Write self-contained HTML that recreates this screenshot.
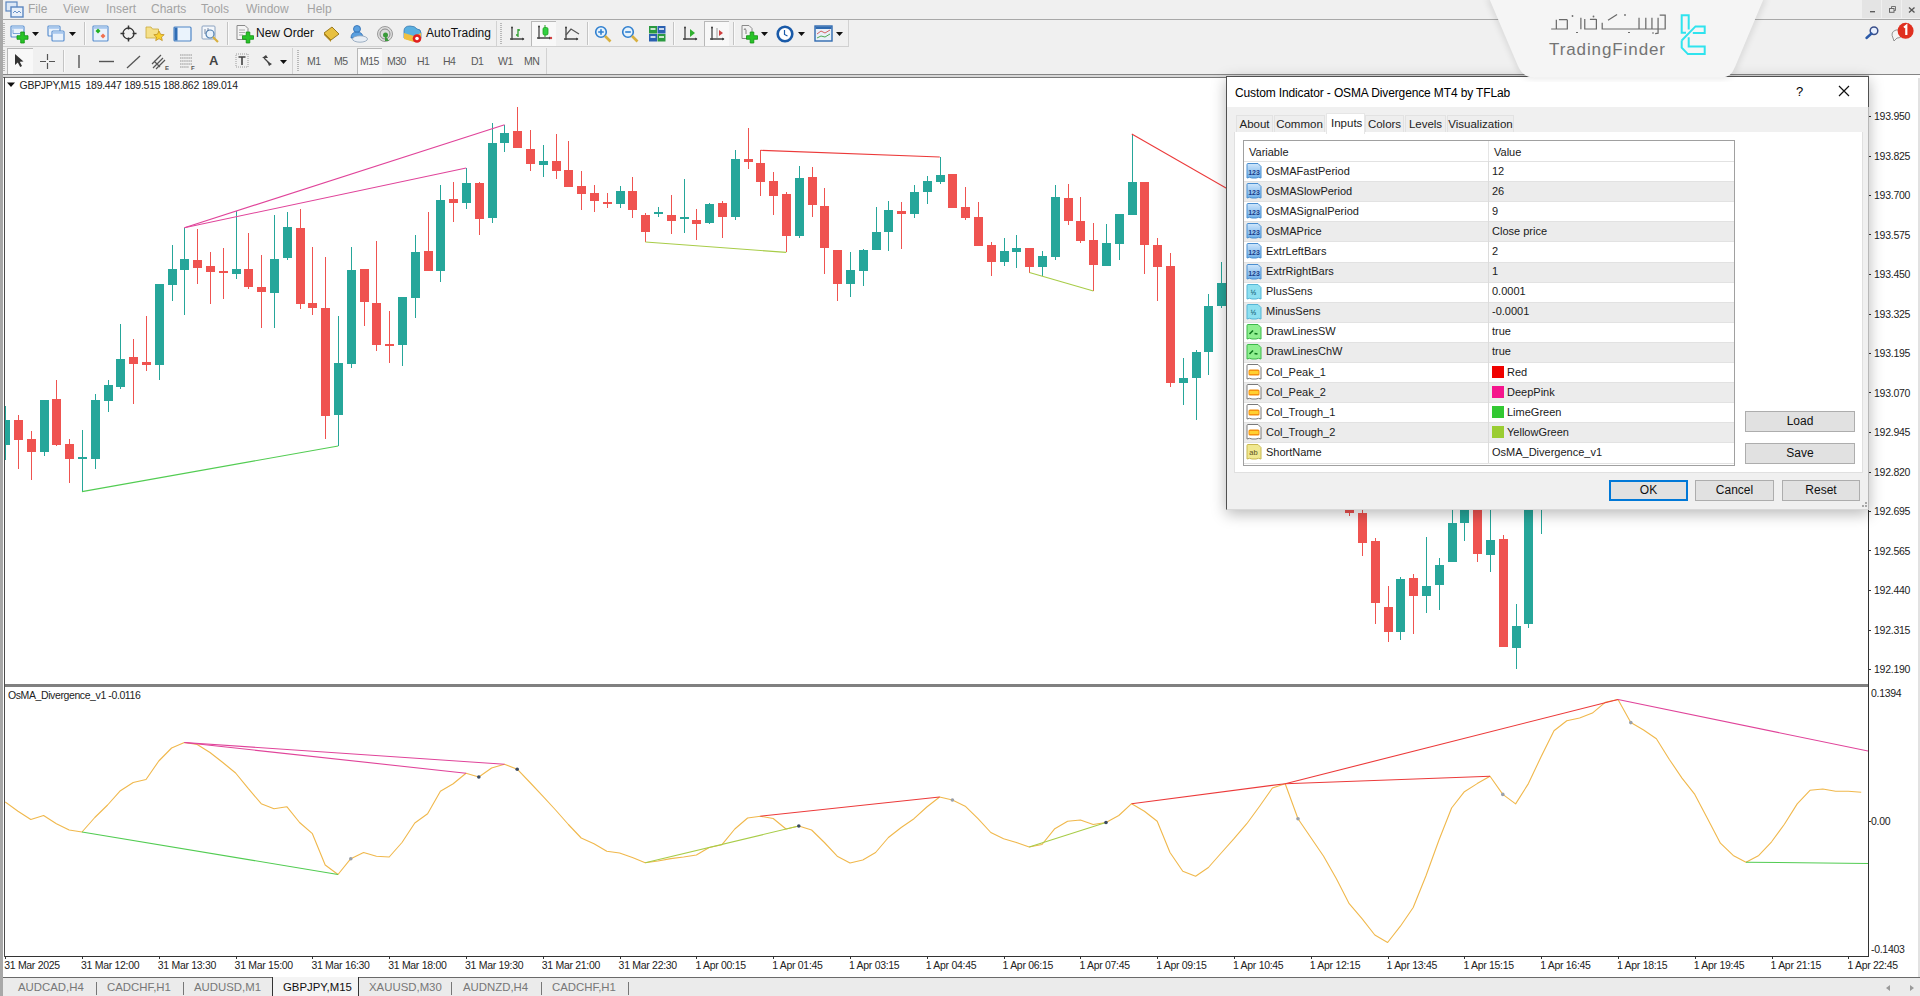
<!DOCTYPE html>
<html><head><meta charset="utf-8">
<style>
*{box-sizing:border-box}
html,body{margin:0;padding:0}
body{width:1920px;height:996px;overflow:hidden;position:relative;background:#f0f0f0;font-family:"Liberation Sans",sans-serif;}
.a{position:absolute}
.menu{left:0;top:0;width:1920px;height:20px;background:#f0f0f0;border-bottom:1px solid #a8a8a8}
.menu span{position:absolute;top:2px;font-size:12px;color:#a3a3a3}
.tb{left:0;width:1920px;background:#f0f0f0}
.chartwin{left:3px;top:77px;width:1917px;height:900px;background:#fff;border-top:1px solid #777}
svg{position:absolute;left:0;top:0}
.pl{position:absolute;left:1874px;font-size:10.5px;letter-spacing:-0.25px;color:#222;line-height:14px}
.tk{position:absolute;left:1868px;width:3px;height:1px;background:#333}
.tl{position:absolute;top:958px;font-size:10.5px;letter-spacing:-0.3px;color:#222;line-height:14px;white-space:nowrap}
.ttk{position:absolute;top:956px;width:1px;height:3px;background:#333}
.tabs{left:0;top:977px;width:1920px;height:19px;background:#ebebeb;border-top:1px solid #6a6a6a}
.tsep{position:absolute;top:4px;width:1px;height:13px;background:#777}
.tabs span{position:absolute;top:3px;font-size:11.4px;color:#777}
.dlg{position:absolute;left:0;top:0;z-index:20}
.dt{font-size:12px;letter-spacing:-0.13px;color:#000;white-space:nowrap;line-height:15px}
.dt2{font-size:11px;color:#1a1a1a;white-space:nowrap;line-height:14px}
.tab{background:#eeeeee;border:1px solid #e2e2e2;border-bottom:none;font-size:11.5px;color:#222;text-align:center;line-height:16px}
.tab.sel{background:#fff;color:#fff}
.tabt{font-size:11.5px;color:#222;line-height:14px}
.btn{background:#e1e1e1;border:1px solid #adadad;font-size:12px;color:#111;text-align:center;line-height:19px}
.btn.ok{border:2px solid #0078d7;line-height:17px}
.tbt{font-size:12px;color:#111;white-space:nowrap;line-height:15px}
.tf{font-size:10.5px;color:#5a5a5a;line-height:13px;letter-spacing:-0.5px}
</style></head>
<body>
<div class="a" style="left:0;top:0;width:3px;height:996px;background:#a8a8a8;z-index:5"></div>
<div class="a menu">
<span style="left:28px">File</span><span style="left:63px">View</span><span style="left:106px">Insert</span><span style="left:151px">Charts</span><span style="left:201px">Tools</span><span style="left:246px">Window</span><span style="left:307px">Help</span>
</div>
<div class="a tb" style="top:20px;height:27px"></div><div class="a" style="left:0;top:46px;width:849px;height:1px;background:#d0d0d0"></div>
<div class="a tb" style="top:47px;height:28px;border-bottom:1px solid #858585"></div>

<div class="a" style="left:1px;top:20px;width:848px;height:26px;border-right:1px solid #d2d2d2"></div>
<div class="a" style="left:496px;top:21px;width:1px;height:25px;background:#d2d2d2"></div>
<div class="a" style="left:3px;top:23px;width:2px;height:21px;background:repeating-linear-gradient(#b8b8b8 0 1px,transparent 1px 2px)"></div>
<div class="a" style="left:500px;top:23px;width:2px;height:21px;background:repeating-linear-gradient(#b8b8b8 0 1px,transparent 1px 2px)"></div>
<div class="a" style="left:3px;top:50px;width:2px;height:22px;background:repeating-linear-gradient(#b8b8b8 0 1px,transparent 1px 2px)"></div>
<div class="a" style="left:297px;top:50px;width:2px;height:22px;background:repeating-linear-gradient(#b8b8b8 0 1px,transparent 1px 2px)"></div>
<div class="a" style="left:546px;top:48px;width:1px;height:26px;background:#d2d2d2"></div>
<div class="a" style="left:292px;top:48px;width:1px;height:26px;background:#d2d2d2"></div>
<svg class="a" style="left:10px;top:25px" width="20" height="19" viewBox="0 0 20 19"><rect x="1" y="1" width="13" height="11" rx="1" fill="#eaf2fb" stroke="#5b8fcf" stroke-width="1.2"/><rect x="1.6" y="1.6" width="11.8" height="2.2" fill="#a8c8ee"/><path d="M3,4.5 v4 h7" stroke="#5b8fcf" stroke-width="0.8" fill="none"/><path d="M10.7,7.0 h3.6 v3.7 h3.7 v3.6 h-3.7 v3.7 h-3.6 v-3.7 h-3.7 v-3.6 h3.7 Z" fill="#28c428" stroke="#109010" stroke-width="0.8"/></svg>
<svg class="a" style="left:32px;top:32px" width="7" height="4" viewBox="0 0 7 4"><path d="M0,0 L7,0 L3.5,4 Z" fill="#111"/></svg>
<svg class="a" style="left:47px;top:25px" width="19" height="18" viewBox="0 0 19 18"><rect x="1" y="1" width="12" height="10" rx="1" fill="#eaf2fb" stroke="#5b8fcf" stroke-width="1.2"/><rect x="1.6" y="1.6" width="10.8" height="2.2" fill="#a8c8ee"/><rect x="5" y="6" width="12" height="10" rx="1" fill="#eaf2fb" stroke="#5b8fcf" stroke-width="1.2"/><rect x="5.6" y="6.6" width="10.8" height="2.2" fill="#a8c8ee"/></svg>
<svg class="a" style="left:69px;top:32px" width="7" height="4" viewBox="0 0 7 4"><path d="M0,0 L7,0 L3.5,4 Z" fill="#111"/></svg>
<div class="a" style="left:84px;top:22px;width:1px;height:23px;background:#c4c4c4"></div><div class="a" style="left:85px;top:22px;width:1px;height:23px;background:#fafafa"></div>
<svg class="a" style="left:92px;top:25px" width="18" height="18" viewBox="0 0 18 18"><rect x="1" y="1" width="15" height="15" rx="1" fill="#eaf2fb" stroke="#5b8fcf" stroke-width="1.2"/><rect x="1.6" y="1.6" width="13.8" height="2.2" fill="#a8c8ee"/><path d="M6,3.5 l2.5,2.5 l-2.5,2.5 l-2.5,-2.5Z" fill="#22b022"/><path d="M11,8.5 l2.5,2.5 l-2.5,2.5 l-2.5,-2.5Z" fill="#f07050"/></svg>
<svg class="a" style="left:120px;top:25px" width="17" height="17" viewBox="0 0 17 17"><circle cx="8.5" cy="8.5" r="5.5" fill="none" stroke="#333" stroke-width="1.3"/><path d="M8.5,0.5 v4 M8.5,12.5 v4 M0.5,8.5 h4 M12.5,8.5 h4" stroke="#333" stroke-width="1.5"/></svg>
<svg class="a" style="left:145px;top:24px" width="21" height="19" viewBox="0 0 21 19"><path d="M1,3 h5 l1.5,2 h6 v9 h-12.5Z" fill="#f5e08a" stroke="#c9a93a" stroke-width="0.8"/><path d="M14,7 l1.6,3.3 3.6,0.4 -2.7,2.4 0.8,3.5 -3.3,-1.9 -3.3,1.9 0.8,-3.5 -2.7,-2.4 3.6,-0.4Z" fill="#f8d030" stroke="#c09020" stroke-width="0.8"/></svg>
<svg class="a" style="left:173px;top:25px" width="19" height="18" viewBox="0 0 19 18"><rect x="1" y="2" width="17" height="14" rx="1" fill="#eaf3fc" stroke="#4f86c6" stroke-width="1.2"/><rect x="1.5" y="2.5" width="3" height="13" fill="#2f6db5"/></svg>
<svg class="a" style="left:201px;top:24px" width="20" height="20" viewBox="0 0 20 20"><rect x="1" y="2" width="13" height="13" rx="1" fill="#f4f7fb" stroke="#8aa2c0" stroke-width="1"/><circle cx="9" cy="10" r="4" fill="#e8f2fc" stroke="#4f7fb0" stroke-width="1.2"/><path d="M12,13 l5,5" stroke="#d8b040" stroke-width="2.2"/><path d="M4,5 v5 M7,4 v3" stroke="#5a7090" stroke-width="0.8"/></svg>
<div class="a" style="left:227px;top:22px;width:1px;height:23px;background:#c4c4c4"></div><div class="a" style="left:228px;top:22px;width:1px;height:23px;background:#fafafa"></div>
<svg class="a" style="left:235px;top:24px" width="20" height="20" viewBox="0 0 20 20"><path d="M2,1.5 h8 l3,3 v11 h-11Z" fill="#f4f4f4" stroke="#8a8a8a" stroke-width="1"/><path d="M4,6 h6 M4,8.5 h6 M4,11 h4" stroke="#999" stroke-width="0.8"/><path d="M11.2,8.0 h3.6 v3.7 h3.7 v3.6 h-3.7 v3.7 h-3.6 v-3.7 h-3.7 v-3.6 h3.7 Z" fill="#28c428" stroke="#109010" stroke-width="0.8"/></svg>
<div class="a tbt" style="left:256px;top:26px">New Order</div>
<svg class="a" style="left:322px;top:25px" width="19" height="18" viewBox="0 0 19 18"><path d="M2,8 l8,-6 l7,7 l-8,6Z" fill="#e8c040" stroke="#9a7a20" stroke-width="1"/><path d="M2,8 l7,7 v2 l-7,-7Z" fill="#b08820"/></svg>
<svg class="a" style="left:349px;top:24px" width="20" height="20" viewBox="0 0 20 20"><circle cx="8" cy="5" r="3.5" fill="#5aa0e0" stroke="#2a6ab0" stroke-width="0.8"/><path d="M2,14 q0,-6 6,-6 q6,0 6,6Z" fill="#5aa0e0" stroke="#2a6ab0" stroke-width="0.8"/><ellipse cx="11" cy="15" rx="7.5" ry="3.2" fill="#e8eef5" stroke="#8aa0b8" stroke-width="0.8"/></svg>
<svg class="a" style="left:376px;top:25px" width="19" height="18" viewBox="0 0 19 18"><circle cx="9" cy="9" r="7.5" fill="#dcdcdc" stroke="#9a9a9a" stroke-width="1"/><circle cx="9" cy="9" r="5" fill="none" stroke="#8a8a8a" stroke-width="1"/><circle cx="9.5" cy="10" r="2.5" fill="#3a9a3a"/><path d="M9,10 l4,6 h-4Z" fill="#3a9a3a"/></svg>
<svg class="a" style="left:402px;top:24px" width="21" height="20" viewBox="0 0 21 20"><path d="M2,7 q0,-5 6,-5 q5,0 7,3 q4,0 4,4 v5 l-7,3 l-10,-3Z" fill="#5ab0e0" stroke="#3a7ab0" stroke-width="0.8"/><path d="M2,9 l10,3 l7,-3 v6 l-7,3 l-10,-3Z" fill="#f0c040"/><circle cx="15" cy="14.5" r="4.3" fill="#e02020"/><circle cx="15" cy="14.5" r="1.8" fill="#fff"/></svg>
<div class="a tbt" style="left:426px;top:26px">AutoTrading</div>
<svg class="a" style="left:509px;top:25px" width="17" height="17" viewBox="0 0 17 17"><path d="M3,2 v13 M1,14 h14" stroke="#444" stroke-width="1.3"/><circle cx="3" cy="2.5" r="1" fill="#444"/><path d="M13,12.5 l2.5,1.5 l-2.5,1.5Z" fill="#444"/><path d="M9,4 v8 M9,5 h2 M7,10 h2" stroke="#30a030" stroke-width="1.3" fill="none"/></svg>
<div class="a" style="left:531px;top:21px;width:25px;height:25px;background:#f8f8f8;border-left:1px solid #b8b8b8;border-top:1px solid #b8b8b8"></div>
<svg class="a" style="left:536px;top:24px" width="17" height="18" viewBox="0 0 17 18"><path d="M3,2 v13 M1,14 h14" stroke="#444" stroke-width="1.3"/><circle cx="3" cy="2.5" r="1" fill="#444"/><path d="M13,12.5 l2.5,1.5 l-2.5,1.5Z" fill="#444"/><path d="M9,1 v12" stroke="#20a020" stroke-width="1"/><rect x="7" y="3.5" width="5" height="7.5" rx="1.5" fill="#30d040" stroke="#20a020" stroke-width="0.8"/><circle cx="15" cy="14" r="1.2" fill="#d04040"/></svg>
<svg class="a" style="left:563px;top:25px" width="17" height="17" viewBox="0 0 17 17"><path d="M3,2 v13 M1,14 h14" stroke="#444" stroke-width="1.3"/><circle cx="3" cy="2.5" r="1" fill="#444"/><path d="M13,12.5 l2.5,1.5 l-2.5,1.5Z" fill="#444"/><path d="M3,10 l5,-6 l8,5" stroke="#555" stroke-width="1.2" fill="none"/></svg>
<div class="a" style="left:587px;top:22px;width:1px;height:23px;background:#c4c4c4"></div><div class="a" style="left:588px;top:22px;width:1px;height:23px;background:#fafafa"></div>
<svg class="a" style="left:594px;top:25px" width="18" height="18" viewBox="0 0 18 18"><circle cx="7" cy="7" r="5.3" fill="#e6f3fd" stroke="#2f7fcf" stroke-width="1.6"/><path d="M11,11 l5.5,5.5" stroke="#d8b040" stroke-width="2.6"/><path d="M4.2,7 h5.6 M7,4.2 v5.6" stroke="#2f7fcf" stroke-width="1.6"/></svg>
<svg class="a" style="left:621px;top:25px" width="18" height="18" viewBox="0 0 18 18"><circle cx="7" cy="7" r="5.3" fill="#e6f3fd" stroke="#2f7fcf" stroke-width="1.6"/><path d="M11,11 l5.5,5.5" stroke="#d8b040" stroke-width="2.6"/><path d="M4.2,7 h5.6" stroke="#2f7fcf" stroke-width="1.6"/></svg>
<svg class="a" style="left:648px;top:25px" width="19" height="18" viewBox="0 0 19 18"><rect x="1" y="1" width="8" height="7.5" fill="#2a9a40"/><rect x="9.5" y="1" width="8" height="7.5" fill="#2a60b0"/><rect x="1" y="9" width="8" height="7.5" fill="#2a60b0"/><rect x="9.5" y="9" width="8" height="7.5" fill="#2a9a40"/><path d="M2.5,4 h5 M11,4 h5 M2.5,12 h5 M11,12 h5" stroke="#fff" stroke-width="1.5"/></svg>
<div class="a" style="left:673px;top:22px;width:1px;height:23px;background:#c4c4c4"></div><div class="a" style="left:674px;top:22px;width:1px;height:23px;background:#fafafa"></div>
<svg class="a" style="left:682px;top:25px" width="17" height="17" viewBox="0 0 17 17"><path d="M3,2 v13 M1,14 h14" stroke="#444" stroke-width="1.3"/><circle cx="3" cy="2.5" r="1" fill="#444"/><path d="M13,12.5 l2.5,1.5 l-2.5,1.5Z" fill="#444"/><path d="M8,4 l5,4 l-5,4Z" fill="#30b030"/></svg>
<div class="a" style="left:704px;top:21px;width:25px;height:25px;background:#f8f8f8;border-left:1px solid #b8b8b8;border-top:1px solid #b8b8b8"></div>
<svg class="a" style="left:709px;top:25px" width="17" height="17" viewBox="0 0 17 17"><path d="M3,2 v13 M1,14 h14" stroke="#444" stroke-width="1.3"/><circle cx="3" cy="2.5" r="1" fill="#444"/><path d="M13,12.5 l2.5,1.5 l-2.5,1.5Z" fill="#444"/><path d="M8,3 v10" stroke="#888" stroke-width="0.8"/><path d="M10,5 l4,3 l-4,3Z" fill="#d04040"/></svg>
<div class="a" style="left:733px;top:22px;width:1px;height:23px;background:#c4c4c4"></div><div class="a" style="left:734px;top:22px;width:1px;height:23px;background:#fafafa"></div>
<svg class="a" style="left:740px;top:24px" width="19" height="20" viewBox="0 0 19 20"><path d="M2,1.5 h7 l3,3 v10 h-10Z" fill="#f2f2f2" stroke="#8a8a8a" stroke-width="1"/><path d="M4,6 q1,-3 2,0 v4" stroke="#777" stroke-width="0.9" fill="none"/><path d="M10.2,8.0 h3.6 v3.7 h3.7 v3.6 h-3.7 v3.7 h-3.6 v-3.7 h-3.7 v-3.6 h3.7 Z" fill="#28c428" stroke="#109010" stroke-width="0.8"/></svg>
<svg class="a" style="left:761px;top:32px" width="7" height="4" viewBox="0 0 7 4"><path d="M0,0 L7,0 L3.5,4 Z" fill="#111"/></svg>
<svg class="a" style="left:776px;top:25px" width="19" height="18" viewBox="0 0 19 18"><circle cx="9" cy="9" r="7.3" fill="#fff" stroke="#1a5aa8" stroke-width="2.6"/><path d="M8.5,5 v4.5 l3,1.5" stroke="#1a5aa8" stroke-width="1.2" fill="none"/></svg>
<svg class="a" style="left:798px;top:32px" width="7" height="4" viewBox="0 0 7 4"><path d="M0,0 L7,0 L3.5,4 Z" fill="#111"/></svg>
<svg class="a" style="left:814px;top:25px" width="19" height="17" viewBox="0 0 19 17"><rect x="1" y="1" width="17" height="15" fill="#e8f0f8" stroke="#2f6ab0" stroke-width="1.4"/><rect x="1.5" y="1.5" width="16" height="2.5" fill="#2f6ab0"/><path d="M3,9 l4,-3 l4,2 l5,-3" stroke="#d05050" stroke-width="0.9" fill="none"/><path d="M3,13 l4,-2 l4,1 l5,-3" stroke="#40a040" stroke-width="0.9" fill="none"/></svg>
<svg class="a" style="left:836px;top:32px" width="7" height="4" viewBox="0 0 7 4"><path d="M0,0 L7,0 L3.5,4 Z" fill="#111"/></svg>
<div class="a" style="left:7px;top:48px;width:26px;height:26px;background:#f8f8f8;border-left:1px solid #b8b8b8;border-top:1px solid #b8b8b8"></div>
<svg class="a" style="left:14px;top:53px" width="11" height="15" viewBox="0 0 11 15"><path d="M1,1 L1,12 L3.8,9.5 L6.2,14 L8,13 L5.8,8.8 L9.5,8.5 Z" fill="#333"/></svg>
<svg class="a" style="left:39px;top:53px" width="17" height="17" viewBox="0 0 17 17"><path d="M8.5,1 v6 M8.5,10 v6 M1,8.5 h6 M10,8.5 h6" stroke="#555" stroke-width="1.2"/></svg>
<div class="a" style="left:63px;top:50px;width:1px;height:22px;background:#c4c4c4"></div><div class="a" style="left:64px;top:50px;width:1px;height:22px;background:#fafafa"></div>
<svg class="a" style="left:77px;top:54px" width="4" height="15" viewBox="0 0 4 15"><path d="M2,1 v13" stroke="#555" stroke-width="1.4"/></svg>
<svg class="a" style="left:99px;top:60px" width="16" height="3" viewBox="0 0 16 3"><path d="M0,1.5 h15" stroke="#555" stroke-width="1.4"/></svg>
<svg class="a" style="left:126px;top:54px" width="16" height="16" viewBox="0 0 16 16"><path d="M1,14 L14,2" stroke="#555" stroke-width="1.3"/></svg>
<svg class="a" style="left:151px;top:53px" width="18" height="18" viewBox="0 0 18 18"><path d="M1,11 L10,2 M2,15 L12,5 M5,16 L14,7 M3,8 L9,14" stroke="#555" stroke-width="1.2"/><text x="14" y="17" font-size="6" font-weight="bold" fill="#555" font-family="Liberation Sans">E</text></svg>
<svg class="a" style="left:179px;top:53px" width="18" height="18" viewBox="0 0 18 18"><path d="M1,2 h12 M1,5 h12 M1,8 h12 M1,11 h12 M1,14 h9" stroke="#888" stroke-width="0.9" stroke-dasharray="1.5 0.6"/><text x="12" y="17" font-size="6" font-weight="bold" fill="#555" font-family="Liberation Sans">F</text></svg>
<div class="a" style="left:209px;top:54px;font-size:13px;font-weight:bold;color:#444;line-height:14px">A</div>
<svg class="a" style="left:235px;top:53px" width="15" height="16" viewBox="0 0 15 16"><rect x="1" y="1" width="12" height="13" fill="none" stroke="#888" stroke-width="0.8" stroke-dasharray="1 1"/><path d="M3.5,4 h7 M7,4 v8" stroke="#444" stroke-width="1.6"/></svg>
<svg class="a" style="left:261px;top:54px" width="13" height="13" viewBox="0 0 13 13"><path d="M1,4 l4,-3 l2,3Z M6,7 l5,3 l-3,2Z" fill="#444"/><path d="M3,4 l5,5" stroke="#444" stroke-width="1.2"/></svg>
<svg class="a" style="left:280px;top:60px" width="7" height="4" viewBox="0 0 7 4"><path d="M0,0 L7,0 L3.5,4 Z" fill="#111"/></svg>
<div class="a" style="left:357px;top:48px;width:25px;height:26px;background:#f8f8f8;border-left:1px solid #b8b8b8;border-top:1px solid #b8b8b8"></div>
<div class="a tf" style="left:307px;top:55px">M1</div>
<div class="a tf" style="left:334px;top:55px">M5</div>
<div class="a tf" style="left:360px;top:55px">M15</div>
<div class="a tf" style="left:387px;top:55px">M30</div>
<div class="a tf" style="left:417px;top:55px">H1</div>
<div class="a tf" style="left:443px;top:55px">H4</div>
<div class="a tf" style="left:471px;top:55px">D1</div>
<div class="a tf" style="left:498px;top:55px">W1</div>
<div class="a tf" style="left:524px;top:55px">MN</div>
<div class="a" style="left:0;top:75px;width:1920px;height:2px;background:#d8d8d8"></div>
<div class="a chartwin"></div>
<div class="a" style="left:1869px;top:75px;width:51px;height:3px;background:#fff"></div>
<div class="a" style="left:1918px;top:78px;width:2px;height:899px;background:#e2e2e2"></div>
<svg width="1920" height="996" viewBox="0 0 1920 996" shape-rendering="crispEdges">
<defs><clipPath id="cm"><rect x="5" y="78" width="1863" height="607"/></clipPath>
<clipPath id="ci"><rect x="5" y="688" width="1863" height="268"/></clipPath></defs>
<g clip-path="url(#cm)">
<rect x="5" y="406" width="1" height="54" fill="#26a69a"/>
<rect x="1" y="420" width="8.5" height="25" fill="#26a69a"/>
<rect x="18" y="414.5" width="1" height="54.5" fill="#ef5350"/>
<rect x="14" y="420" width="8.5" height="19.5" fill="#ef5350"/>
<rect x="31" y="430.5" width="1" height="49.5" fill="#ef5350"/>
<rect x="27" y="439" width="8.5" height="12.5" fill="#ef5350"/>
<rect x="44" y="399.7" width="1" height="55.8" fill="#26a69a"/>
<rect x="40" y="399.7" width="8.5" height="52.7" fill="#26a69a"/>
<rect x="56" y="380" width="1" height="66" fill="#ef5350"/>
<rect x="52" y="398.8" width="8.5" height="45.8" fill="#ef5350"/>
<rect x="69" y="439" width="1" height="44" fill="#ef5350"/>
<rect x="65" y="444" width="8.5" height="14.5" fill="#ef5350"/>
<rect x="82" y="430" width="1" height="61.6" fill="#26a69a"/>
<rect x="78" y="457" width="8.5" height="2" fill="#26a69a"/>
<rect x="95" y="394" width="1" height="75" fill="#26a69a"/>
<rect x="91" y="400" width="8.5" height="58.5" fill="#26a69a"/>
<rect x="108" y="380" width="1" height="32" fill="#26a69a"/>
<rect x="104" y="385" width="8.5" height="16" fill="#26a69a"/>
<rect x="120" y="324.4" width="1" height="64.6" fill="#26a69a"/>
<rect x="116" y="358.8" width="8.5" height="28" fill="#26a69a"/>
<rect x="133" y="339" width="1" height="65" fill="#ef5350"/>
<rect x="129" y="356.7" width="8.5" height="6.9" fill="#ef5350"/>
<rect x="146" y="316" width="1" height="55" fill="#ef5350"/>
<rect x="142" y="362" width="8.5" height="3" fill="#ef5350"/>
<rect x="159" y="284" width="1" height="96" fill="#26a69a"/>
<rect x="155" y="284.3" width="8.5" height="80.7" fill="#26a69a"/>
<rect x="172" y="245" width="1" height="56" fill="#26a69a"/>
<rect x="168" y="269" width="8.5" height="16" fill="#26a69a"/>
<rect x="184" y="227.7" width="1" height="87.3" fill="#26a69a"/>
<rect x="180" y="258.7" width="8.5" height="11.3" fill="#26a69a"/>
<rect x="197" y="229" width="1" height="54.7" fill="#ef5350"/>
<rect x="193" y="260" width="8.5" height="8" fill="#ef5350"/>
<rect x="210" y="252" width="1" height="52" fill="#ef5350"/>
<rect x="206" y="266" width="8.5" height="5.7" fill="#ef5350"/>
<rect x="223" y="248" width="1" height="51" fill="#ef5350"/>
<rect x="219" y="270.8" width="8.5" height="2.2" fill="#ef5350"/>
<rect x="236" y="210.5" width="1" height="68.5" fill="#26a69a"/>
<rect x="232" y="269" width="8.5" height="4.8" fill="#26a69a"/>
<rect x="248" y="232.8" width="1" height="56.2" fill="#ef5350"/>
<rect x="244" y="268.6" width="8.5" height="18.8" fill="#ef5350"/>
<rect x="261" y="255" width="1" height="73.4" fill="#ef5350"/>
<rect x="257" y="286.7" width="8.5" height="4.8" fill="#ef5350"/>
<rect x="274" y="214.7" width="1" height="113" fill="#26a69a"/>
<rect x="270" y="259" width="8.5" height="33.5" fill="#26a69a"/>
<rect x="287" y="212" width="1" height="48" fill="#26a69a"/>
<rect x="283" y="227" width="8.5" height="31.4" fill="#26a69a"/>
<rect x="300" y="209" width="1" height="99.6" fill="#ef5350"/>
<rect x="296" y="227.7" width="8.5" height="76.1" fill="#ef5350"/>
<rect x="312" y="247" width="1" height="68.4" fill="#ef5350"/>
<rect x="308" y="303.4" width="8.5" height="4.6" fill="#ef5350"/>
<rect x="325" y="257.4" width="1" height="181.2" fill="#ef5350"/>
<rect x="321" y="308" width="8.5" height="108.4" fill="#ef5350"/>
<rect x="338" y="316.4" width="1" height="129.6" fill="#26a69a"/>
<rect x="334" y="362.5" width="8.5" height="52.9" fill="#26a69a"/>
<rect x="351" y="246.5" width="1" height="121.1" fill="#26a69a"/>
<rect x="347" y="270.4" width="8.5" height="93.6" fill="#26a69a"/>
<rect x="364" y="268.6" width="1" height="57" fill="#ef5350"/>
<rect x="360" y="268.6" width="8.5" height="33.4" fill="#ef5350"/>
<rect x="376" y="240.7" width="1" height="109.8" fill="#ef5350"/>
<rect x="372" y="302.8" width="8.5" height="42.6" fill="#ef5350"/>
<rect x="389" y="310.6" width="1" height="51.9" fill="#ef5350"/>
<rect x="385" y="344" width="8.5" height="2" fill="#ef5350"/>
<rect x="402" y="297" width="1" height="69" fill="#26a69a"/>
<rect x="398" y="297" width="8.5" height="48.4" fill="#26a69a"/>
<rect x="415" y="234.5" width="1" height="83.5" fill="#26a69a"/>
<rect x="411" y="251.6" width="8.5" height="46" fill="#26a69a"/>
<rect x="428" y="211.7" width="1" height="59.7" fill="#ef5350"/>
<rect x="424" y="251" width="8.5" height="20.4" fill="#ef5350"/>
<rect x="440" y="185" width="1" height="97.3" fill="#26a69a"/>
<rect x="436" y="199.7" width="8.5" height="71.7" fill="#26a69a"/>
<rect x="453" y="181.6" width="1" height="40.4" fill="#ef5350"/>
<rect x="449" y="199.4" width="8.5" height="3.6" fill="#ef5350"/>
<rect x="466" y="168" width="1" height="41" fill="#26a69a"/>
<rect x="462" y="182.7" width="8.5" height="20.3" fill="#26a69a"/>
<rect x="479" y="181.6" width="1" height="52.9" fill="#ef5350"/>
<rect x="475" y="182.7" width="8.5" height="36.3" fill="#ef5350"/>
<rect x="492" y="123" width="1" height="99.6" fill="#26a69a"/>
<rect x="488" y="143.4" width="8.5" height="74.1" fill="#26a69a"/>
<rect x="504" y="124.8" width="1" height="27.2" fill="#26a69a"/>
<rect x="500" y="132.6" width="8.5" height="10.6" fill="#26a69a"/>
<rect x="517" y="107" width="1" height="41" fill="#ef5350"/>
<rect x="513" y="131.4" width="8.5" height="16.6" fill="#ef5350"/>
<rect x="530" y="130" width="1" height="41.2" fill="#ef5350"/>
<rect x="526" y="148.5" width="8.5" height="15.5" fill="#ef5350"/>
<rect x="543" y="144.7" width="1" height="32" fill="#26a69a"/>
<rect x="539" y="161.3" width="8.5" height="3.9" fill="#26a69a"/>
<rect x="556" y="134.3" width="1" height="44.2" fill="#ef5350"/>
<rect x="552" y="160.6" width="8.5" height="9.9" fill="#ef5350"/>
<rect x="568" y="141" width="1" height="45.7" fill="#ef5350"/>
<rect x="564" y="170" width="8.5" height="16.7" fill="#ef5350"/>
<rect x="581" y="171" width="1" height="38.9" fill="#ef5350"/>
<rect x="577" y="186" width="8.5" height="8" fill="#ef5350"/>
<rect x="594" y="185" width="1" height="27" fill="#ef5350"/>
<rect x="590" y="192.6" width="8.5" height="8" fill="#ef5350"/>
<rect x="607" y="192.9" width="1" height="14.8" fill="#ef5350"/>
<rect x="603" y="201.7" width="8.5" height="2" fill="#ef5350"/>
<rect x="620" y="186" width="1" height="21.7" fill="#26a69a"/>
<rect x="616" y="191" width="8.5" height="12.7" fill="#26a69a"/>
<rect x="632" y="177.4" width="1" height="40.2" fill="#ef5350"/>
<rect x="628" y="191" width="8.5" height="19" fill="#ef5350"/>
<rect x="645" y="212.7" width="1" height="29.3" fill="#ef5350"/>
<rect x="641" y="215.4" width="8.5" height="16.1" fill="#ef5350"/>
<rect x="658" y="207" width="1" height="9.5" fill="#26a69a"/>
<rect x="654" y="212" width="8.5" height="2.3" fill="#26a69a"/>
<rect x="671" y="195" width="1" height="38.7" fill="#ef5350"/>
<rect x="667" y="215" width="8.5" height="5.5" fill="#ef5350"/>
<rect x="684" y="178.5" width="1" height="54.5" fill="#26a69a"/>
<rect x="680" y="217" width="8.5" height="2.4" fill="#26a69a"/>
<rect x="696" y="208.8" width="1" height="31.6" fill="#ef5350"/>
<rect x="692" y="220" width="8.5" height="3.6" fill="#ef5350"/>
<rect x="709" y="202.8" width="1" height="21.4" fill="#26a69a"/>
<rect x="705" y="204" width="8.5" height="18.7" fill="#26a69a"/>
<rect x="722" y="200.6" width="1" height="37.4" fill="#ef5350"/>
<rect x="718" y="203.2" width="8.5" height="13.3" fill="#ef5350"/>
<rect x="735" y="150" width="1" height="69.8" fill="#26a69a"/>
<rect x="731" y="159" width="8.5" height="58" fill="#26a69a"/>
<rect x="748" y="128.4" width="1" height="41" fill="#ef5350"/>
<rect x="744" y="159.3" width="8.5" height="3" fill="#ef5350"/>
<rect x="760" y="150.3" width="1" height="45.7" fill="#ef5350"/>
<rect x="756" y="163" width="8.5" height="18.8" fill="#ef5350"/>
<rect x="773" y="172" width="1" height="43" fill="#ef5350"/>
<rect x="769" y="180.8" width="8.5" height="14.7" fill="#ef5350"/>
<rect x="786" y="192" width="1" height="60.4" fill="#ef5350"/>
<rect x="782" y="193.6" width="8.5" height="42.4" fill="#ef5350"/>
<rect x="799" y="165.5" width="1" height="72.5" fill="#26a69a"/>
<rect x="795" y="177.6" width="8.5" height="58.4" fill="#26a69a"/>
<rect x="812" y="167" width="1" height="50" fill="#ef5350"/>
<rect x="808" y="176.6" width="8.5" height="28.4" fill="#ef5350"/>
<rect x="824" y="188.4" width="1" height="85.9" fill="#ef5350"/>
<rect x="820" y="205.6" width="8.5" height="42" fill="#ef5350"/>
<rect x="837" y="249.5" width="1" height="51.5" fill="#ef5350"/>
<rect x="833" y="250.4" width="8.5" height="34" fill="#ef5350"/>
<rect x="850" y="252.4" width="1" height="44.6" fill="#26a69a"/>
<rect x="846" y="270" width="8.5" height="13.8" fill="#26a69a"/>
<rect x="863" y="248.5" width="1" height="37.2" fill="#26a69a"/>
<rect x="859" y="250.4" width="8.5" height="20.6" fill="#26a69a"/>
<rect x="876" y="207" width="1" height="43" fill="#26a69a"/>
<rect x="872" y="231.7" width="8.5" height="18.3" fill="#26a69a"/>
<rect x="888" y="201" width="1" height="49.8" fill="#26a69a"/>
<rect x="884" y="210.4" width="8.5" height="21.9" fill="#26a69a"/>
<rect x="901" y="202.4" width="1" height="46.1" fill="#ef5350"/>
<rect x="897" y="211.3" width="8.5" height="2.9" fill="#ef5350"/>
<rect x="914" y="184.6" width="1" height="33.4" fill="#26a69a"/>
<rect x="910" y="191.9" width="8.5" height="22.3" fill="#26a69a"/>
<rect x="927" y="176" width="1" height="28.3" fill="#26a69a"/>
<rect x="923" y="180.8" width="8.5" height="11.5" fill="#26a69a"/>
<rect x="940" y="157" width="1" height="26.7" fill="#26a69a"/>
<rect x="936" y="175" width="8.5" height="6.8" fill="#26a69a"/>
<rect x="952" y="174" width="1" height="34" fill="#ef5350"/>
<rect x="948" y="174" width="8.5" height="34" fill="#ef5350"/>
<rect x="965" y="187" width="1" height="32.5" fill="#ef5350"/>
<rect x="961" y="206.6" width="8.5" height="11.4" fill="#ef5350"/>
<rect x="978" y="201.8" width="1" height="43.9" fill="#ef5350"/>
<rect x="974" y="217" width="8.5" height="28.7" fill="#ef5350"/>
<rect x="991" y="242.4" width="1" height="33.8" fill="#ef5350"/>
<rect x="987" y="245" width="8.5" height="16.5" fill="#ef5350"/>
<rect x="1004" y="238.3" width="1" height="28" fill="#26a69a"/>
<rect x="1000" y="251.4" width="8.5" height="10.2" fill="#26a69a"/>
<rect x="1016" y="235" width="1" height="32.9" fill="#26a69a"/>
<rect x="1012" y="247.6" width="8.5" height="4.7" fill="#26a69a"/>
<rect x="1029" y="248" width="1" height="24.5" fill="#ef5350"/>
<rect x="1025" y="248.2" width="8.5" height="18.8" fill="#ef5350"/>
<rect x="1042" y="250.7" width="1" height="24.9" fill="#26a69a"/>
<rect x="1038" y="256.3" width="8.5" height="10.7" fill="#26a69a"/>
<rect x="1055" y="185.4" width="1" height="74.6" fill="#26a69a"/>
<rect x="1051" y="197.2" width="8.5" height="59.8" fill="#26a69a"/>
<rect x="1068" y="183.8" width="1" height="41.4" fill="#ef5350"/>
<rect x="1064" y="198.4" width="8.5" height="22.6" fill="#ef5350"/>
<rect x="1080" y="197.2" width="1" height="45.8" fill="#ef5350"/>
<rect x="1076" y="220.5" width="8.5" height="20.3" fill="#ef5350"/>
<rect x="1093" y="222.7" width="1" height="68.3" fill="#ef5350"/>
<rect x="1089" y="239.8" width="8.5" height="25.6" fill="#ef5350"/>
<rect x="1106" y="224.3" width="1" height="42" fill="#26a69a"/>
<rect x="1102" y="243" width="8.5" height="23.3" fill="#26a69a"/>
<rect x="1119" y="214" width="1" height="45.5" fill="#26a69a"/>
<rect x="1115" y="214" width="8.5" height="29.9" fill="#26a69a"/>
<rect x="1132" y="134" width="1" height="81" fill="#26a69a"/>
<rect x="1128" y="181.6" width="8.5" height="33.4" fill="#26a69a"/>
<rect x="1144" y="182.3" width="1" height="91.7" fill="#ef5350"/>
<rect x="1140" y="182.3" width="8.5" height="63.1" fill="#ef5350"/>
<rect x="1157" y="237.7" width="1" height="62.8" fill="#ef5350"/>
<rect x="1153" y="245" width="8.5" height="22" fill="#ef5350"/>
<rect x="1170" y="253.2" width="1" height="133.8" fill="#ef5350"/>
<rect x="1166" y="266.3" width="8.5" height="116.7" fill="#ef5350"/>
<rect x="1183" y="358" width="1" height="46.8" fill="#26a69a"/>
<rect x="1179" y="378.4" width="8.5" height="4.6" fill="#26a69a"/>
<rect x="1196" y="349.7" width="1" height="69.8" fill="#26a69a"/>
<rect x="1192" y="352" width="8.5" height="26.4" fill="#26a69a"/>
<rect x="1208" y="293.7" width="1" height="81.6" fill="#26a69a"/>
<rect x="1204" y="306" width="8.5" height="46" fill="#26a69a"/>
<rect x="1221" y="261.6" width="1" height="46.4" fill="#26a69a"/>
<rect x="1217" y="282.5" width="8.5" height="23.5" fill="#26a69a"/>
<rect x="1349" y="480" width="1" height="36" fill="#ef5350"/>
<rect x="1345" y="490" width="8.5" height="22.7" fill="#ef5350"/>
<rect x="1362" y="490" width="1" height="65.6" fill="#ef5350"/>
<rect x="1358" y="513.3" width="8.5" height="29.2" fill="#ef5350"/>
<rect x="1375" y="538" width="1" height="86" fill="#ef5350"/>
<rect x="1371" y="540.5" width="8.5" height="62.5" fill="#ef5350"/>
<rect x="1388" y="586" width="1" height="56" fill="#ef5350"/>
<rect x="1384" y="606.7" width="8.5" height="25.6" fill="#ef5350"/>
<rect x="1400" y="576.6" width="1" height="63.4" fill="#26a69a"/>
<rect x="1396" y="579" width="8.5" height="53.3" fill="#26a69a"/>
<rect x="1413" y="573.7" width="1" height="60.7" fill="#ef5350"/>
<rect x="1409" y="578.4" width="8.5" height="17.2" fill="#ef5350"/>
<rect x="1426" y="536.7" width="1" height="75.8" fill="#26a69a"/>
<rect x="1422" y="586" width="8.5" height="9.6" fill="#26a69a"/>
<rect x="1439" y="557.7" width="1" height="52.3" fill="#26a69a"/>
<rect x="1435" y="565" width="8.5" height="19.8" fill="#26a69a"/>
<rect x="1452" y="490" width="1" height="72.3" fill="#26a69a"/>
<rect x="1448" y="523" width="8.5" height="39.3" fill="#26a69a"/>
<rect x="1464" y="480" width="1" height="61" fill="#26a69a"/>
<rect x="1460" y="490" width="8.5" height="33" fill="#26a69a"/>
<rect x="1477" y="480" width="1" height="81.5" fill="#ef5350"/>
<rect x="1473" y="490" width="8.5" height="63.6" fill="#ef5350"/>
<rect x="1490" y="480" width="1" height="91.7" fill="#26a69a"/>
<rect x="1486" y="540" width="8.5" height="14.7" fill="#26a69a"/>
<rect x="1503" y="535" width="1" height="112" fill="#ef5350"/>
<rect x="1499" y="539" width="8.5" height="108" fill="#ef5350"/>
<rect x="1516" y="603.7" width="1" height="65.7" fill="#26a69a"/>
<rect x="1512" y="625.6" width="8.5" height="21.9" fill="#26a69a"/>
<rect x="1528" y="480" width="1" height="147.7" fill="#26a69a"/>
<rect x="1524" y="490" width="8.5" height="134" fill="#26a69a"/>
<rect x="1541" y="460" width="1" height="73.7" fill="#26a69a"/>
<rect x="1537" y="470" width="8.5" height="20" fill="#26a69a"/>
<line x1="184.4" y1="227.7" x2="504.6" y2="124.8" stroke="#e0449a" stroke-width="1.1" shape-rendering="auto"/>
<line x1="184.4" y1="227.7" x2="466.2" y2="168" stroke="#e0449a" stroke-width="1.1" shape-rendering="auto"/>
<line x1="82" y1="491.6" x2="338.2" y2="446" stroke="#52cc52" stroke-width="1.1" shape-rendering="auto"/>
<line x1="645.4" y1="242" x2="786.2" y2="252.4" stroke="#a8cc48" stroke-width="1.1" shape-rendering="auto"/>
<line x1="760.6" y1="150.3" x2="939.8" y2="157" stroke="#ec3a3a" stroke-width="1.1" shape-rendering="auto"/>
<line x1="1029.4" y1="272.5" x2="1093.4" y2="291" stroke="#a8cc48" stroke-width="1.1" shape-rendering="auto"/>
<line x1="1131.8" y1="134" x2="1285.2" y2="222" stroke="#ec3a3a" stroke-width="1.1" shape-rendering="auto"/>
</g>
<g clip-path="url(#ci)" shape-rendering="auto">
<polyline points="5.2,802 18,811.2 30.8,819.5 43.6,815.5 56.4,823.7 69.2,830 82,832 94.8,817.5 107.6,805 120.4,790.7 133.2,782.5 146,779.5 158.8,761 171.6,748 184.4,742.5 197.2,744.5 210,752.5 222.8,762.5 235.6,773 248.4,788.7 261.2,803.7 274,808.7 286.8,806.7 299.6,822.5 312.4,833.7 325.2,865 338,874.5 350.8,858.7 363.6,852.5 376.4,856.2 389.2,857 402,842.5 414.8,823 427.6,813.7 440.4,791.2 453.2,783.7 466,773.2 478.8,777 491.6,768 504.4,764.2 517.2,769.2 530,782.5 542.8,796.2 555.6,810 568.4,824.5 581.2,838 594,843.7 606.8,851.2 619.6,853 632.4,857.5 645.2,862.7 658,861 670.8,858.6 683.6,857 696.4,855 709.2,847.5 722,844.7 734.8,829 747.6,818 760.4,816.2 773.2,818.5 786,829 798.8,826 811.6,830 824.4,842.5 837.2,856.2 850,863 862.8,860 875.6,852.5 888.4,837.5 901.2,827.5 914,818.7 926.8,807 939.6,797 952.4,800 965.2,806.2 978,818.7 990.8,832.5 1003.6,838.7 1016.4,842.5 1029.2,847 1042,844.5 1054.8,828.7 1067.6,821.2 1080.4,820 1093.2,824.5 1106,822.5 1118.8,815.5 1131.6,803.7 1144.4,811.2 1157.2,821.2 1170,852.5 1182.8,871.2 1195.6,876.2 1208.4,867.5 1221.2,853 1234,838.7 1246.8,823.7 1259.6,806.2 1272.4,788 1285.2,783.7 1298,818.7 1310.8,837.5 1323.6,856.2 1336.4,878.7 1349.2,903.7 1362,918.7 1374.8,935 1387.6,942.5 1400.4,926.2 1413.2,907.5 1426,875.7 1438.8,840.5 1451.6,808 1464.4,791.7 1477.2,783.6 1490,776.2 1502.8,794.4 1515.6,803.9 1528.4,783.6 1541.2,756.5 1554,730.7 1566.8,720.7 1579.6,718 1592.4,713.1 1605.2,702.3 1618,699.5 1630.8,722.6 1643.6,730 1656.4,738.8 1669.2,759.2 1682,778.1 1694.8,794.4 1707.6,818.8 1720.4,843.2 1733.2,855.4 1746,862.2 1758.8,855.4 1771.6,841.8 1784.4,824.2 1797.2,803.9 1810,790.3 1822.8,789 1835.6,791.2 1848.4,791.2 1861.2,792.2" fill="none" stroke="#f0b84c" stroke-width="1.1" stroke-linejoin="round"/>
<line x1="184.4" y1="742.5" x2="504.4" y2="764.2" stroke="#e0449a" stroke-width="1.1"/>
<line x1="184.4" y1="742.5" x2="466" y2="773.2" stroke="#e0449a" stroke-width="1.1"/>
<line x1="82" y1="832" x2="338" y2="874.5" stroke="#52cc52" stroke-width="1.1"/>
<line x1="645.2" y1="862.7" x2="798.8" y2="826" stroke="#a8cc48" stroke-width="1.1"/>
<line x1="760.4" y1="816.2" x2="939.6" y2="797" stroke="#ec3a3a" stroke-width="1.1"/>
<line x1="1029.2" y1="847" x2="1106" y2="822.5" stroke="#a8cc48" stroke-width="1.1"/>
<line x1="1131.6" y1="803.7" x2="1285.2" y2="783.7" stroke="#ec3a3a" stroke-width="1.1"/>
<line x1="1285.2" y1="783.7" x2="1618" y2="699.5" stroke="#ec3a3a" stroke-width="1.1"/>
<line x1="1285.2" y1="783.7" x2="1490" y2="776.2" stroke="#ec3a3a" stroke-width="1.1"/>
<line x1="1618" y1="699.5" x2="1868" y2="751" stroke="#e0449a" stroke-width="1.1"/>
<line x1="1746" y1="862.2" x2="1868" y2="863.5" stroke="#52cc52" stroke-width="1.1"/>
<circle cx="350.8" cy="858.7" r="1.8" fill="#9aa0a8"/>
<circle cx="478.8" cy="777" r="1.8" fill="#3a4a60"/>
<circle cx="517.2" cy="769.2" r="1.8" fill="#3a4a60"/>
<circle cx="798.8" cy="826" r="1.8" fill="#3a4a60"/>
<circle cx="952.4" cy="800" r="1.8" fill="#9aa0a8"/>
<circle cx="1106" cy="822.5" r="1.8" fill="#3a4a60"/>
<circle cx="1298" cy="818.7" r="1.8" fill="#9aa0a8"/>
<circle cx="1502.8" cy="794.4" r="1.8" fill="#9aa0a8"/>
<circle cx="1630.8" cy="722.6" r="1.8" fill="#9aa0a8"/>
</g>
<rect x="1868" y="78" width="1" height="878" fill="#333"/>
<rect x="4" y="77" width="1" height="880" fill="#4a4a4a"/>
<rect x="5" y="684" width="1863" height="3" fill="#808080"/>
<rect x="5" y="956" width="1864" height="1" fill="#333"/>
<rect x="1868" y="821" width="3" height="1" fill="#333"/>
</svg>
<div class="pl" style="top:109px">193.950</div>
<div class="tk" style="top:116px"></div>
<div class="pl" style="top:148.5px">193.825</div>
<div class="tk" style="top:156px"></div>
<div class="pl" style="top:188px">193.700</div>
<div class="tk" style="top:195px"></div>
<div class="pl" style="top:227.5px">193.575</div>
<div class="tk" style="top:234px"></div>
<div class="pl" style="top:267px">193.450</div>
<div class="tk" style="top:274px"></div>
<div class="pl" style="top:306.5px">193.325</div>
<div class="tk" style="top:314px"></div>
<div class="pl" style="top:346px">193.195</div>
<div class="tk" style="top:353px"></div>
<div class="pl" style="top:385.5px">193.070</div>
<div class="tk" style="top:392px"></div>
<div class="pl" style="top:425px">192.945</div>
<div class="tk" style="top:432px"></div>
<div class="pl" style="top:464.5px">192.820</div>
<div class="tk" style="top:472px"></div>
<div class="pl" style="top:504px">192.695</div>
<div class="tk" style="top:511px"></div>
<div class="pl" style="top:543.5px">192.565</div>
<div class="tk" style="top:550px"></div>
<div class="pl" style="top:583px">192.440</div>
<div class="tk" style="top:590px"></div>
<div class="pl" style="top:622.5px">192.315</div>
<div class="tk" style="top:630px"></div>
<div class="pl" style="top:662px">192.190</div>
<div class="tk" style="top:669px"></div>
<div class="tl" style="left:4.2px">31 Mar 2025</div>
<div class="ttk" style="left:5px"></div>
<div class="tl" style="left:81px">31 Mar 12:00</div>
<div class="ttk" style="left:82px"></div>
<div class="tl" style="left:157.8px">31 Mar 13:30</div>
<div class="ttk" style="left:159px"></div>
<div class="tl" style="left:234.6px">31 Mar 15:00</div>
<div class="ttk" style="left:236px"></div>
<div class="tl" style="left:311.4px">31 Mar 16:30</div>
<div class="ttk" style="left:312px"></div>
<div class="tl" style="left:388.2px">31 Mar 18:00</div>
<div class="ttk" style="left:389px"></div>
<div class="tl" style="left:465px">31 Mar 19:30</div>
<div class="ttk" style="left:466px"></div>
<div class="tl" style="left:541.8px">31 Mar 21:00</div>
<div class="ttk" style="left:543px"></div>
<div class="tl" style="left:618.6px">31 Mar 22:30</div>
<div class="ttk" style="left:620px"></div>
<div class="tl" style="left:695.4px">1 Apr 00:15</div>
<div class="ttk" style="left:696px"></div>
<div class="tl" style="left:772.2px">1 Apr 01:45</div>
<div class="ttk" style="left:773px"></div>
<div class="tl" style="left:849px">1 Apr 03:15</div>
<div class="ttk" style="left:850px"></div>
<div class="tl" style="left:925.8px">1 Apr 04:45</div>
<div class="ttk" style="left:927px"></div>
<div class="tl" style="left:1002.6px">1 Apr 06:15</div>
<div class="ttk" style="left:1004px"></div>
<div class="tl" style="left:1079.4px">1 Apr 07:45</div>
<div class="ttk" style="left:1080px"></div>
<div class="tl" style="left:1156.2px">1 Apr 09:15</div>
<div class="ttk" style="left:1157px"></div>
<div class="tl" style="left:1233px">1 Apr 10:45</div>
<div class="ttk" style="left:1234px"></div>
<div class="tl" style="left:1309.8px">1 Apr 12:15</div>
<div class="ttk" style="left:1311px"></div>
<div class="tl" style="left:1386.6px">1 Apr 13:45</div>
<div class="ttk" style="left:1388px"></div>
<div class="tl" style="left:1463.4px">1 Apr 15:15</div>
<div class="ttk" style="left:1464px"></div>
<div class="tl" style="left:1540.2px">1 Apr 16:45</div>
<div class="ttk" style="left:1541px"></div>
<div class="tl" style="left:1617px">1 Apr 18:15</div>
<div class="ttk" style="left:1618px"></div>
<div class="tl" style="left:1693.8px">1 Apr 19:45</div>
<div class="ttk" style="left:1695px"></div>
<div class="tl" style="left:1770.6px">1 Apr 21:15</div>
<div class="ttk" style="left:1772px"></div>
<div class="tl" style="left:1847.4px">1 Apr 22:45</div>
<div class="ttk" style="left:1848px"></div>
<svg class="a" style="left:7px;top:82px" width="9" height="6" viewBox="0 0 9 6"><path d="M0,0.5 H8 L4,5 Z" fill="#111"/></svg><div class="a" style="left:19.5px;top:79px;font-size:10.5px;letter-spacing:-0.27px;color:#222;white-space:nowrap;line-height:13px">GBPJPY,M15&nbsp; 189.447 189.515 188.862 189.014</div>
<div class="a" style="left:8px;top:689px;font-size:10.5px;letter-spacing:-0.4px;color:#222;white-space:nowrap;line-height:13px">OsMA_Divergence_v1 -0.0116</div>
<div class="a" style="left:1871px;top:687px;font-size:10.5px;letter-spacing:-0.3px;color:#222;line-height:13px">0.1394</div>
<div class="a" style="left:1871px;top:815px;font-size:10.5px;letter-spacing:-0.3px;color:#222;line-height:13px">0.00</div>
<div class="a" style="left:1871px;top:943px;font-size:10.5px;letter-spacing:-0.3px;color:#222;line-height:13px">-0.1403</div>

<div class="a tabs">
<span style="left:18px">AUDCAD,H4</span><span style="left:107px">CADCHF,H1</span><span style="left:194px">AUDUSD,M1</span>
<div class="a" style="left:272px;top:-1px;width:87px;height:20px;border:1px solid #333;border-top:none;background:#f4f4f4"></div><span style="left:283px;color:#111">GBPJPY,M15</span><div class="tsep" style="left:96px"></div><div class="tsep" style="left:183px"></div><div class="tsep" style="left:451px"></div><div class="tsep" style="left:541px"></div><div class="tsep" style="left:628px"></div><svg class="a" style="left:1880px;top:4px" width="40" height="12" viewBox="0 0 40 12"><path d="M10,3 l-4,3 l4,3Z M30,3 l4,3 l-4,3Z" fill="#9a9a9a"/></svg><span style="left:369px">XAUUSD,M30</span><span style="left:463px">AUDNZD,H4</span><span style="left:552px">CADCHF,H1</span>
</div>

<div class="dlg">
<div class="a" style="left:1226px;top:76px;width:643px;height:434px;background:#f0f0f0;border:1px solid #505050;border-right:1px solid #b8b8b8;border-bottom:1px solid #d8d8d8;box-shadow:0 4px 14px rgba(0,0,0,0.28)"></div>
<div class="a" style="left:1868px;top:76px;width:1px;height:31px;background:#505050"></div>
<svg class="a" style="left:1860px;top:501px" width="8" height="8" viewBox="0 0 8 8"><g fill="#a8a8a8"><rect x="5" y="1" width="2" height="2"/><rect x="2" y="4" width="2" height="2"/><rect x="5" y="4" width="2" height="2"/></g></svg>
<div class="a" style="left:1227px;top:77px;width:641px;height:30px;background:#fff"></div>
<div class="a dt" style="left:1235px;top:85.5px">Custom Indicator - OSMA Divergence MT4 by TFLab</div>
<div class="a dt" style="left:1796px;top:84px;font-size:13px">?</div>
<svg class="a" style="left:1838px;top:85px" width="12" height="12" viewBox="0 0 12 12"><path d="M1,1 L11,11 M11,1 L1,11" stroke="#111" stroke-width="1.2"/></svg>
<div class="a tab" style="left:1236px;top:115px;width:37px;height:18px">About</div>
<div class="a tab" style="left:1274px;top:115px;width:51px;height:18px">Common</div>
<div class="a tab sel" style="left:1326px;top:113px;width:39px;height:21px">Inputs</div>
<div class="a tab" style="left:1365px;top:115px;width:39px;height:18px">Colors</div>
<div class="a tab" style="left:1405px;top:115px;width:41px;height:18px">Levels</div>
<div class="a tab" style="left:1447px;top:115px;width:67px;height:18px">Visualization</div>
<div class="a" style="left:1234px;top:132px;width:629px;height:341px;background:#fff;border:1px solid #e0e0e0;border-top:none"></div>
<div class="a" style="left:1326px;top:113px;width:39px;height:21px;background:#fff;border:1px solid #e6e6e6;border-bottom:none;z-index:2"></div>
<div class="a tabt" style="left:1331px;top:116px;z-index:3">Inputs</div>
<div class="a" style="left:1243px;top:140px;width:492px;height:326px;background:#fff;border:1px solid #a0a0a0"></div>
<div class="a dt2" style="left:1249px;top:145px">Variable</div>
<div class="a dt2" style="left:1494px;top:145px">Value</div>
<div class="a" style="left:1488px;top:141px;width:1px;height:20px;background:#e5e5e5"></div>
<div class="a" style="left:1244px;top:161.0px;width:490px;height:20.1px;background:#fff;border-top:1px solid #e2e2e2"></div>
<div class="a" style="left:1246px;top:163.0px;width:16px;height:16px"><svg width="16" height="16" viewBox="0 0 16 16"><defs><linearGradient id="gi" x1="0" y1="0" x2="0" y2="1"><stop offset="0" stop-color="#cfe6fb"/><stop offset="1" stop-color="#6fb0ea"/></linearGradient></defs><path d="M1,1.5 Q1,0.5 2,0.5 L12,0.5 L15,3.5 L15,15 Q12.5,13.6 10,15 L6,15 Q3.5,13.6 1,15 Z" fill="url(#gi)" stroke="#4a8fd0" stroke-width="1"/><text x="8" y="11.5" font-size="7" font-weight="bold" text-anchor="middle" fill="#1a3f8a" font-family="Liberation Sans">123</text></svg></div>
<div class="a dt2" style="left:1266px;top:163.5px">OsMAFastPeriod</div>
<div class="a dt2" style="left:1492px;top:163.5px">12</div>
<div class="a" style="left:1244px;top:181.1px;width:490px;height:20.1px;background:#ececec;border-top:1px solid #e2e2e2"></div>
<div class="a" style="left:1246px;top:183.1px;width:16px;height:16px"><svg width="16" height="16" viewBox="0 0 16 16"><defs><linearGradient id="gi" x1="0" y1="0" x2="0" y2="1"><stop offset="0" stop-color="#cfe6fb"/><stop offset="1" stop-color="#6fb0ea"/></linearGradient></defs><path d="M1,1.5 Q1,0.5 2,0.5 L12,0.5 L15,3.5 L15,15 Q12.5,13.6 10,15 L6,15 Q3.5,13.6 1,15 Z" fill="url(#gi)" stroke="#4a8fd0" stroke-width="1"/><text x="8" y="11.5" font-size="7" font-weight="bold" text-anchor="middle" fill="#1a3f8a" font-family="Liberation Sans">123</text></svg></div>
<div class="a dt2" style="left:1266px;top:183.6px">OsMASlowPeriod</div>
<div class="a dt2" style="left:1492px;top:183.6px">26</div>
<div class="a" style="left:1244px;top:201.2px;width:490px;height:20.1px;background:#fff;border-top:1px solid #e2e2e2"></div>
<div class="a" style="left:1246px;top:203.2px;width:16px;height:16px"><svg width="16" height="16" viewBox="0 0 16 16"><defs><linearGradient id="gi" x1="0" y1="0" x2="0" y2="1"><stop offset="0" stop-color="#cfe6fb"/><stop offset="1" stop-color="#6fb0ea"/></linearGradient></defs><path d="M1,1.5 Q1,0.5 2,0.5 L12,0.5 L15,3.5 L15,15 Q12.5,13.6 10,15 L6,15 Q3.5,13.6 1,15 Z" fill="url(#gi)" stroke="#4a8fd0" stroke-width="1"/><text x="8" y="11.5" font-size="7" font-weight="bold" text-anchor="middle" fill="#1a3f8a" font-family="Liberation Sans">123</text></svg></div>
<div class="a dt2" style="left:1266px;top:203.7px">OsMASignalPeriod</div>
<div class="a dt2" style="left:1492px;top:203.7px">9</div>
<div class="a" style="left:1244px;top:221.3px;width:490px;height:20.1px;background:#ececec;border-top:1px solid #e2e2e2"></div>
<div class="a" style="left:1246px;top:223.3px;width:16px;height:16px"><svg width="16" height="16" viewBox="0 0 16 16"><defs><linearGradient id="gi" x1="0" y1="0" x2="0" y2="1"><stop offset="0" stop-color="#cfe6fb"/><stop offset="1" stop-color="#6fb0ea"/></linearGradient></defs><path d="M1,1.5 Q1,0.5 2,0.5 L12,0.5 L15,3.5 L15,15 Q12.5,13.6 10,15 L6,15 Q3.5,13.6 1,15 Z" fill="url(#gi)" stroke="#4a8fd0" stroke-width="1"/><text x="8" y="11.5" font-size="7" font-weight="bold" text-anchor="middle" fill="#1a3f8a" font-family="Liberation Sans">123</text></svg></div>
<div class="a dt2" style="left:1266px;top:223.8px">OsMAPrice</div>
<div class="a dt2" style="left:1492px;top:223.8px">Close price</div>
<div class="a" style="left:1244px;top:241.4px;width:490px;height:20.1px;background:#fff;border-top:1px solid #e2e2e2"></div>
<div class="a" style="left:1246px;top:243.4px;width:16px;height:16px"><svg width="16" height="16" viewBox="0 0 16 16"><defs><linearGradient id="gi" x1="0" y1="0" x2="0" y2="1"><stop offset="0" stop-color="#cfe6fb"/><stop offset="1" stop-color="#6fb0ea"/></linearGradient></defs><path d="M1,1.5 Q1,0.5 2,0.5 L12,0.5 L15,3.5 L15,15 Q12.5,13.6 10,15 L6,15 Q3.5,13.6 1,15 Z" fill="url(#gi)" stroke="#4a8fd0" stroke-width="1"/><text x="8" y="11.5" font-size="7" font-weight="bold" text-anchor="middle" fill="#1a3f8a" font-family="Liberation Sans">123</text></svg></div>
<div class="a dt2" style="left:1266px;top:243.9px">ExtrLeftBars</div>
<div class="a dt2" style="left:1492px;top:243.9px">2</div>
<div class="a" style="left:1244px;top:261.5px;width:490px;height:20.1px;background:#ececec;border-top:1px solid #e2e2e2"></div>
<div class="a" style="left:1246px;top:263.5px;width:16px;height:16px"><svg width="16" height="16" viewBox="0 0 16 16"><defs><linearGradient id="gi" x1="0" y1="0" x2="0" y2="1"><stop offset="0" stop-color="#cfe6fb"/><stop offset="1" stop-color="#6fb0ea"/></linearGradient></defs><path d="M1,1.5 Q1,0.5 2,0.5 L12,0.5 L15,3.5 L15,15 Q12.5,13.6 10,15 L6,15 Q3.5,13.6 1,15 Z" fill="url(#gi)" stroke="#4a8fd0" stroke-width="1"/><text x="8" y="11.5" font-size="7" font-weight="bold" text-anchor="middle" fill="#1a3f8a" font-family="Liberation Sans">123</text></svg></div>
<div class="a dt2" style="left:1266px;top:264.0px">ExtrRightBars</div>
<div class="a dt2" style="left:1492px;top:264.0px">1</div>
<div class="a" style="left:1244px;top:281.6px;width:490px;height:20.1px;background:#fff;border-top:1px solid #e2e2e2"></div>
<div class="a" style="left:1246px;top:283.6px;width:16px;height:16px"><svg width="16" height="16" viewBox="0 0 16 16"><path d="M1,1.5 Q1,0.5 2,0.5 L12,0.5 L15,3.5 L15,15 Q12.5,13.6 10,15 L6,15 Q3.5,13.6 1,15 Z" fill="#8fe0f0" stroke="#55b5d5" stroke-width="1"/><text x="7.5" y="10.5" font-size="7" font-weight="bold" text-anchor="middle" fill="#1a6a80" font-family="Liberation Sans">½</text></svg></div>
<div class="a dt2" style="left:1266px;top:284.1px">PlusSens</div>
<div class="a dt2" style="left:1492px;top:284.1px">0.0001</div>
<div class="a" style="left:1244px;top:301.7px;width:490px;height:20.1px;background:#ececec;border-top:1px solid #e2e2e2"></div>
<div class="a" style="left:1246px;top:303.7px;width:16px;height:16px"><svg width="16" height="16" viewBox="0 0 16 16"><path d="M1,1.5 Q1,0.5 2,0.5 L12,0.5 L15,3.5 L15,15 Q12.5,13.6 10,15 L6,15 Q3.5,13.6 1,15 Z" fill="#8fe0f0" stroke="#55b5d5" stroke-width="1"/><text x="7.5" y="10.5" font-size="7" font-weight="bold" text-anchor="middle" fill="#1a6a80" font-family="Liberation Sans">½</text></svg></div>
<div class="a dt2" style="left:1266px;top:304.2px">MinusSens</div>
<div class="a dt2" style="left:1492px;top:304.2px">-0.0001</div>
<div class="a" style="left:1244px;top:321.8px;width:490px;height:20.1px;background:#fff;border-top:1px solid #e2e2e2"></div>
<div class="a" style="left:1246px;top:323.8px;width:16px;height:16px"><svg width="16" height="16" viewBox="0 0 16 16"><path d="M1,1.5 Q1,0.5 2,0.5 L12,0.5 L15,3.5 L15,15 Q12.5,13.6 10,15 L6,15 Q3.5,13.6 1,15 Z" fill="#8fef8f" stroke="#3cb84a" stroke-width="1"/><path d="M3.5,10 L7,6.5 M8.5,9.5 L11.5,10" stroke="#107a20" stroke-width="1.6" fill="none"/></svg></div>
<div class="a dt2" style="left:1266px;top:324.3px">DrawLinesSW</div>
<div class="a dt2" style="left:1492px;top:324.3px">true</div>
<div class="a" style="left:1244px;top:341.9px;width:490px;height:20.1px;background:#ececec;border-top:1px solid #e2e2e2"></div>
<div class="a" style="left:1246px;top:343.9px;width:16px;height:16px"><svg width="16" height="16" viewBox="0 0 16 16"><path d="M1,1.5 Q1,0.5 2,0.5 L12,0.5 L15,3.5 L15,15 Q12.5,13.6 10,15 L6,15 Q3.5,13.6 1,15 Z" fill="#8fef8f" stroke="#3cb84a" stroke-width="1"/><path d="M3.5,10 L7,6.5 M8.5,9.5 L11.5,10" stroke="#107a20" stroke-width="1.6" fill="none"/></svg></div>
<div class="a dt2" style="left:1266px;top:344.4px">DrawLinesChW</div>
<div class="a dt2" style="left:1492px;top:344.4px">true</div>
<div class="a" style="left:1244px;top:362.0px;width:490px;height:20.1px;background:#fff;border-top:1px solid #e2e2e2"></div>
<div class="a" style="left:1246px;top:364.0px;width:16px;height:16px"><svg width="16" height="16" viewBox="0 0 16 16"><path d="M1,1.5 Q1,0.5 2,0.5 L12,0.5 L15,3.5 L15,15 Q12.5,13.6 10,15 L6,15 Q3.5,13.6 1,15 Z" fill="#ffffff" stroke="#7a7a7a" stroke-width="1"/><rect x="2.5" y="5.5" width="11" height="6" rx="1.5" fill="#f59010"/><rect x="3.5" y="7" width="9" height="3" fill="#ffd030"/></svg></div>
<div class="a dt2" style="left:1266px;top:364.5px">Col_Peak_1</div>
<div class="a" style="left:1492px;top:366.0px;width:12px;height:12px;background:#f00000"></div>
<div class="a dt2" style="left:1507px;top:364.5px">Red</div>
<div class="a" style="left:1244px;top:382.1px;width:490px;height:20.1px;background:#ececec;border-top:1px solid #e2e2e2"></div>
<div class="a" style="left:1246px;top:384.1px;width:16px;height:16px"><svg width="16" height="16" viewBox="0 0 16 16"><path d="M1,1.5 Q1,0.5 2,0.5 L12,0.5 L15,3.5 L15,15 Q12.5,13.6 10,15 L6,15 Q3.5,13.6 1,15 Z" fill="#ffffff" stroke="#7a7a7a" stroke-width="1"/><rect x="2.5" y="5.5" width="11" height="6" rx="1.5" fill="#f59010"/><rect x="3.5" y="7" width="9" height="3" fill="#ffd030"/></svg></div>
<div class="a dt2" style="left:1266px;top:384.6px">Col_Peak_2</div>
<div class="a" style="left:1492px;top:386.1px;width:12px;height:12px;background:#f5148c"></div>
<div class="a dt2" style="left:1507px;top:384.6px">DeepPink</div>
<div class="a" style="left:1244px;top:402.2px;width:490px;height:20.1px;background:#fff;border-top:1px solid #e2e2e2"></div>
<div class="a" style="left:1246px;top:404.2px;width:16px;height:16px"><svg width="16" height="16" viewBox="0 0 16 16"><path d="M1,1.5 Q1,0.5 2,0.5 L12,0.5 L15,3.5 L15,15 Q12.5,13.6 10,15 L6,15 Q3.5,13.6 1,15 Z" fill="#ffffff" stroke="#7a7a7a" stroke-width="1"/><rect x="2.5" y="5.5" width="11" height="6" rx="1.5" fill="#f59010"/><rect x="3.5" y="7" width="9" height="3" fill="#ffd030"/></svg></div>
<div class="a dt2" style="left:1266px;top:404.7px">Col_Trough_1</div>
<div class="a" style="left:1492px;top:406.2px;width:12px;height:12px;background:#32c832"></div>
<div class="a dt2" style="left:1507px;top:404.7px">LimeGreen</div>
<div class="a" style="left:1244px;top:422.3px;width:490px;height:20.1px;background:#ececec;border-top:1px solid #e2e2e2"></div>
<div class="a" style="left:1246px;top:424.3px;width:16px;height:16px"><svg width="16" height="16" viewBox="0 0 16 16"><path d="M1,1.5 Q1,0.5 2,0.5 L12,0.5 L15,3.5 L15,15 Q12.5,13.6 10,15 L6,15 Q3.5,13.6 1,15 Z" fill="#ffffff" stroke="#7a7a7a" stroke-width="1"/><rect x="2.5" y="5.5" width="11" height="6" rx="1.5" fill="#f59010"/><rect x="3.5" y="7" width="9" height="3" fill="#ffd030"/></svg></div>
<div class="a dt2" style="left:1266px;top:424.8px">Col_Trough_2</div>
<div class="a" style="left:1492px;top:426.3px;width:12px;height:12px;background:#9acd32"></div>
<div class="a dt2" style="left:1507px;top:424.8px">YellowGreen</div>
<div class="a" style="left:1244px;top:442.4px;width:490px;height:20.1px;background:#fff;border-top:1px solid #e2e2e2"></div>
<div class="a" style="left:1246px;top:444.4px;width:16px;height:16px"><svg width="16" height="16" viewBox="0 0 16 16"><path d="M1,1.5 Q1,0.5 2,0.5 L12,0.5 L15,3.5 L15,15 Q12.5,13.6 10,15 L6,15 Q3.5,13.6 1,15 Z" fill="#f0e890" stroke="#c8b850" stroke-width="1"/><text x="7.5" y="11" font-size="7.5" text-anchor="middle" fill="#5a5020" font-family="Liberation Sans">ab</text></svg></div>
<div class="a dt2" style="left:1266px;top:444.9px">ShortName</div>
<div class="a dt2" style="left:1492px;top:444.9px">OsMA_Divergence_v1</div>
<div class="a" style="left:1488px;top:161px;width:1px;height:302px;background:#dcdcdc"></div>
<div class="a" style="left:1244px;top:462.5px;width:490px;height:1px;background:#e2e2e2"></div>
<div class="a btn " style="left:1745px;top:411px;width:110px;height:21px">Load</div>
<div class="a btn " style="left:1745px;top:443px;width:110px;height:21px">Save</div>
<div class="a btn ok" style="left:1609px;top:480px;width:79px;height:21px">OK</div>
<div class="a btn " style="left:1695px;top:480px;width:79px;height:21px">Cancel</div>
<div class="a btn " style="left:1782px;top:480px;width:78px;height:21px">Reset</div>
</div>
<svg class="a" style="left:1470px;top:0px;z-index:30" width="320" height="82" viewBox="1470 0 320 82">
<defs><filter id="lsh" x="-10%" y="-20%" width="120%" height="140%"><feGaussianBlur stdDeviation="3"/></filter></defs>
<path d="M1486,-2 L1517,68 Q1522,79 1533,79 L1722,79 Q1733,79 1737,68 L1767,-2 Z" fill="#000" opacity="0.09" filter="url(#lsh)"/>
<path d="M1489,-2 L1518,66 Q1523,77.5 1534,77.5 L1722,77.5 Q1731,77.5 1735,67 L1764,-2 Z" fill="#f5f5f5"/>
<path d="M1686,32.7 H1681.7 V15.3 H1688.7 V29.5 M1681.7,40.5 L1695.5,26.4 H1704.7 V33 H1692.8 M1681.7,40.5 V47.6 L1687.9,54.1 H1704.7 V46.5 H1688.7 V37.3" fill="none" stroke="#2fe3ee" stroke-width="2"/>
<g transform="translate(1546,8) scale(0.0646)" fill="none" stroke="#6a6a6a" stroke-width="19">
<path d="M1760,110 H1845 V325 H870 V230 M1735,150 V390 L1690,398 M1640,150 V325 M1545,150 V325 M1440,150 V325 M960,190 L1100,100 M780,170 V325 H600 V170 M680,175 H780 M540,150 V330 M330,180 V325 H80 M160,180 V325 M200,180 H330"/>
</g>
<g fill="#6e6e6e"><circle cx="1625" cy="15" r="0.9"/><circle cx="1572.5" cy="16" r="0.9"/><circle cx="1593.5" cy="16.5" r="0.9"/><rect x="1628" y="32" width="2" height="1"/><rect x="1576" y="32" width="2" height="1"/><rect x="1652" y="32.5" width="2" height="1"/></g>
</svg>
<div class="a" style="left:1549px;top:40px;z-index:31;font-size:17px;color:#747474;letter-spacing:0.9px;line-height:20px;font-weight:normal">TradingFinder</div>
<div class="a" style="left:1862px;top:0;width:19px;height:18px;background:#e4e4e4"></div>
<div class="a" style="left:1882px;top:0;width:19px;height:18px;background:#e4e4e4"></div>
<div class="a" style="left:1902px;top:0;width:18px;height:18px;background:#e4e4e4"></div>
<svg class="a" style="left:1862px;top:0" width="58" height="18" viewBox="1862 0 58 18"><path d="M1870,11.7 h5" stroke="#555" stroke-width="1.3"/><rect x="1889.5" y="8.5" width="4.5" height="3.8" fill="none" stroke="#666" stroke-width="1"/><path d="M1891.5,8.5 v-2 h4 v4 h-1.5" fill="none" stroke="#666" stroke-width="0.9"/><path d="M1909,7.5 l5.5,5 M1914.5,7.5 l-5.5,5" stroke="#555" stroke-width="1.3"/></svg>
<svg class="a" style="left:1860px;top:20px" width="60" height="26" viewBox="1860 20 60 26"><circle cx="1874" cy="30.8" r="3.8" fill="#e8f0ff" stroke="#3a4f8a" stroke-width="1.5"/><path d="M1871.5,33.5 L1866.5,38" stroke="#2c5aa8" stroke-width="2.4" stroke-linecap="round"/><path d="M1893,38 q-3,-6 3,-8 q6,-1 6,4 q0,4 -5,4 l-3,3 Z" fill="#f4f4f4" stroke="#888" stroke-width="0.9"/><circle cx="1905.6" cy="30.8" r="8" fill="#e03020"/><path d="M1904,27.5 l2.3,-1.8 v9.3" stroke="#fff" stroke-width="2.2" fill="none"/></svg>
<svg class="a" style="left:4px;top:0px" width="20" height="19" viewBox="0 0 20 19"><rect x="2" y="2" width="11" height="9" fill="#dde8f6" stroke="#5b86c0" stroke-width="1.2"/><rect x="7" y="7" width="12" height="10" fill="#e8f0fa" stroke="#5b86c0" stroke-width="1.4"/><path d="M9,13 l2,-2 l2,2 l2,-2 l2,2" stroke="#5b86c0" stroke-width="0.9" fill="none"/></svg>
</body></html>
